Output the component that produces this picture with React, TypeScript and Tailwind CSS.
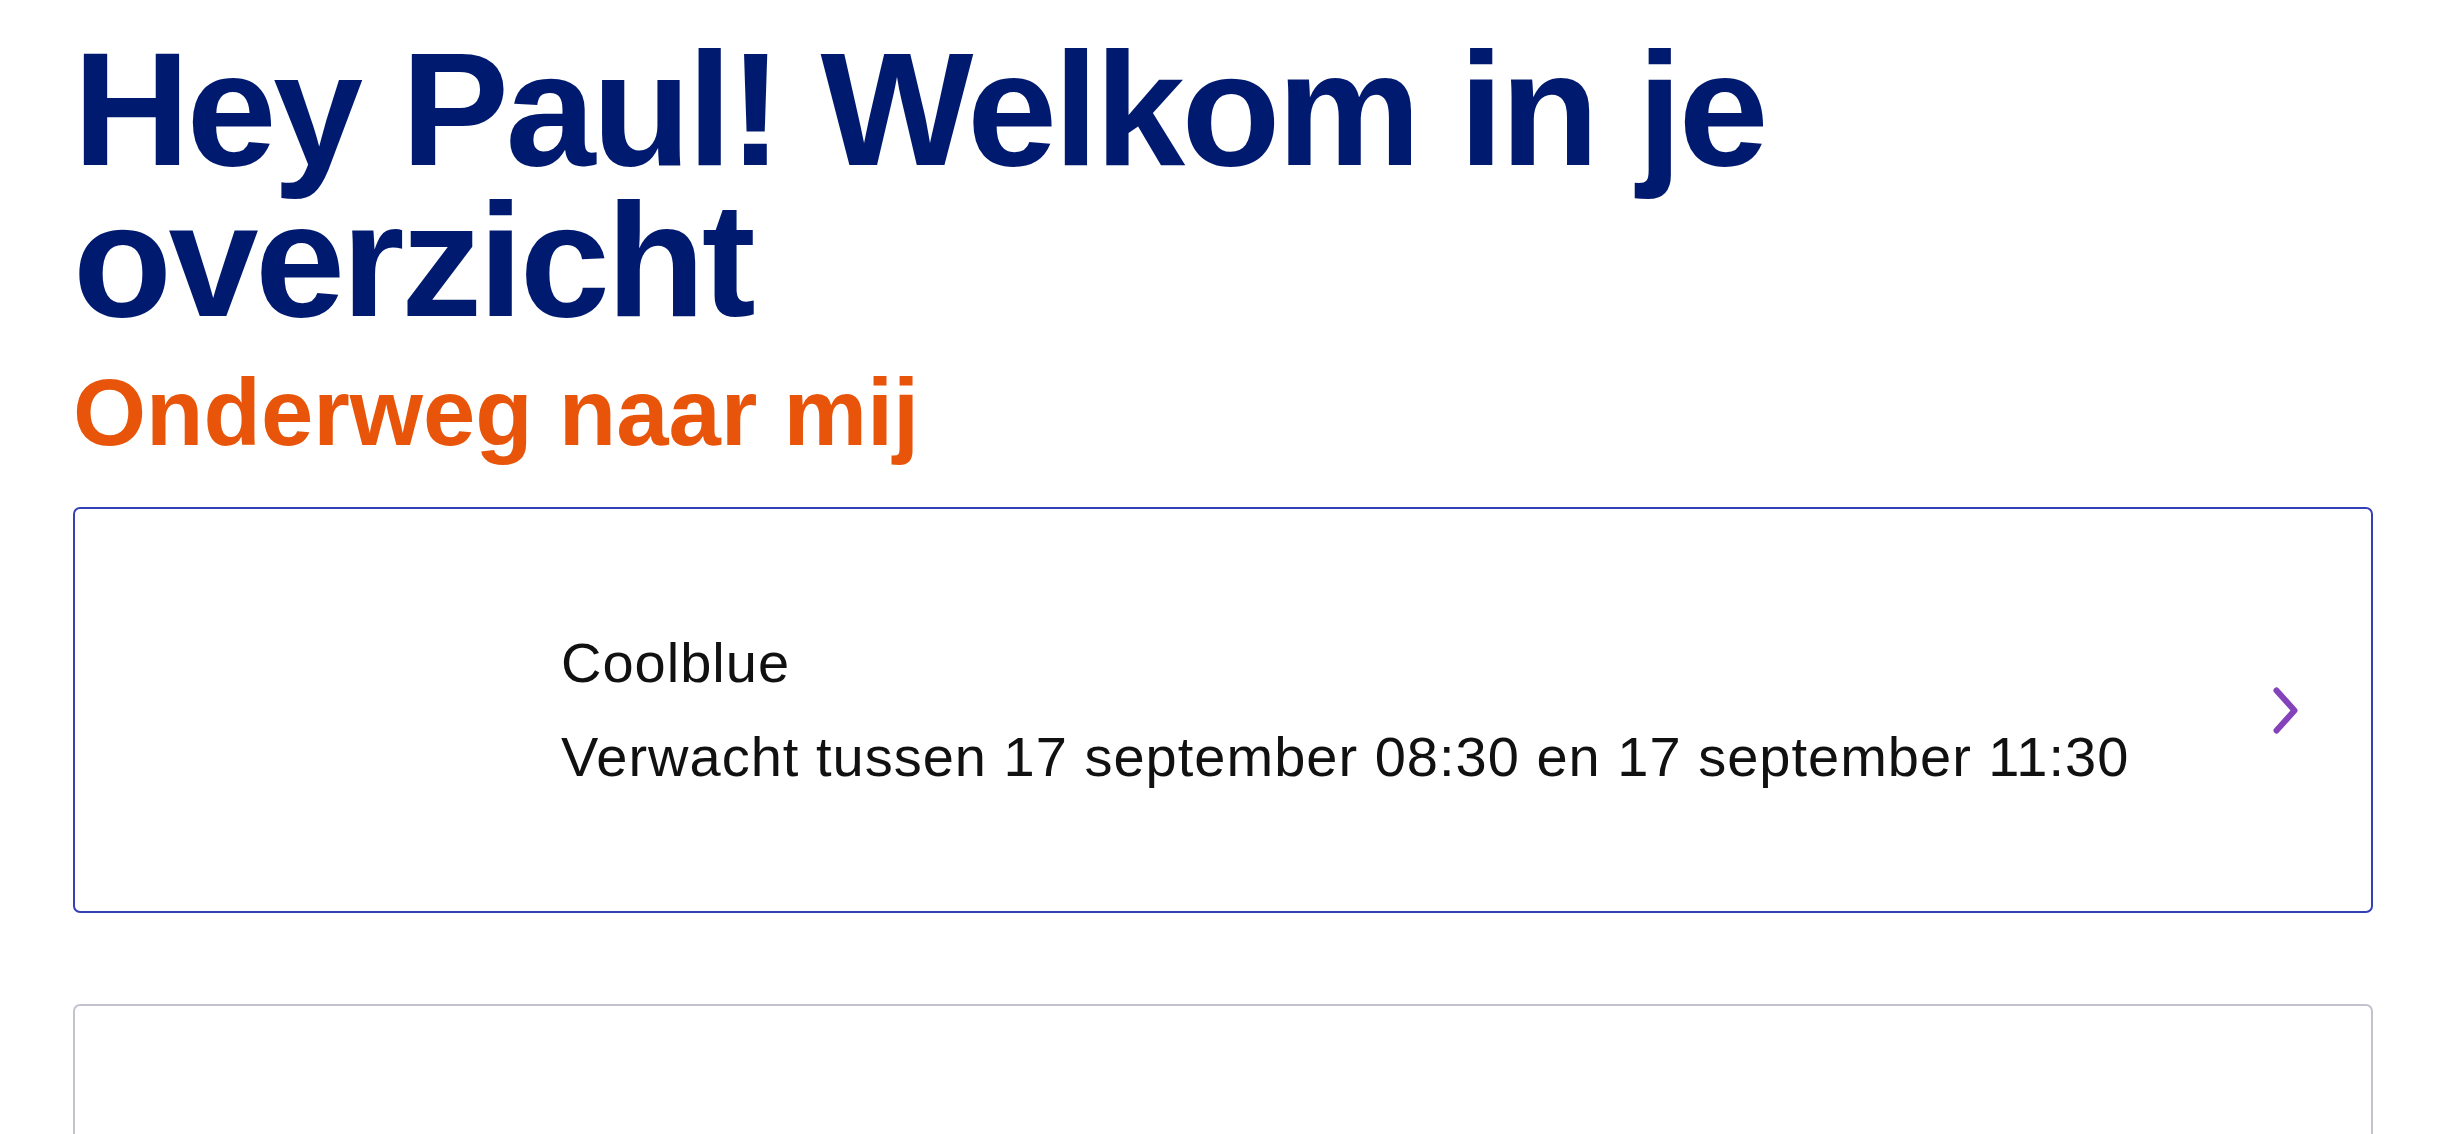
import React from 'react'

interface Delivery {
    shop: string
    window: string
}

const deliveries: Array<Delivery> = [
    { shop: 'Coolblue', window: 'Verwacht tussen 17 september 08:30 en 17 september 11:30' },
]

const Chevron = () => (
    <svg width="25" height="47" viewBox="0 0 25 47" fill="none" aria-hidden="true">
        <path d="M3.5 3.5L21.5 23.5L3.5 43.5" stroke="#8442bb" strokeWidth="6" strokeLinecap="round" strokeLinejoin="round" />
    </svg>
)

const DeliveryCard: React.FC<{ data: Delivery }> = ({ data }) => (
    <div className="flex items-center rounded-[7px] border-2 border-[#3441b6] bg-white py-[112px] pl-[48px] pr-[73px]">
        {/* logo slot, empty in this state */}
        <div className="w-[390px] shrink-0" />
        <div className="ml-[48px] flex flex-col gap-[10px] text-[56px] leading-[84px] tracking-[0.018em] text-[#111]">
            <div>{data.shop}</div>
            <div>{data.window}</div>
        </div>
        <div className="ml-auto">
            <Chevron />
        </div>
    </div>
)

export default function App() {
    return (
        <div className="min-h-screen bg-white px-[73px] pt-[33px] font-['Liberation_Sans',Arial,sans-serif]">
            <h1 className="text-[162px] font-bold leading-[151px] tracking-[-0.022em] text-[#001a70]">
                Hey Paul! Welkom in je overzicht
            </h1>
            <h2 className="mt-[21px] text-[94px] font-bold leading-[113px] text-[#e8550a]">
                Onderweg naar mij
            </h2>

            <div className="mt-[38px] flex flex-col gap-[91px]">
                {deliveries.map((item, index) => (
                    <DeliveryCard key={index} data={item} />
                ))}
                {/* next card, mostly below the fold */}
                <div className="h-[407px] rounded-[7px] border-2 border-[#c2c3cd] bg-white" />
            </div>
        </div>
    )
}
